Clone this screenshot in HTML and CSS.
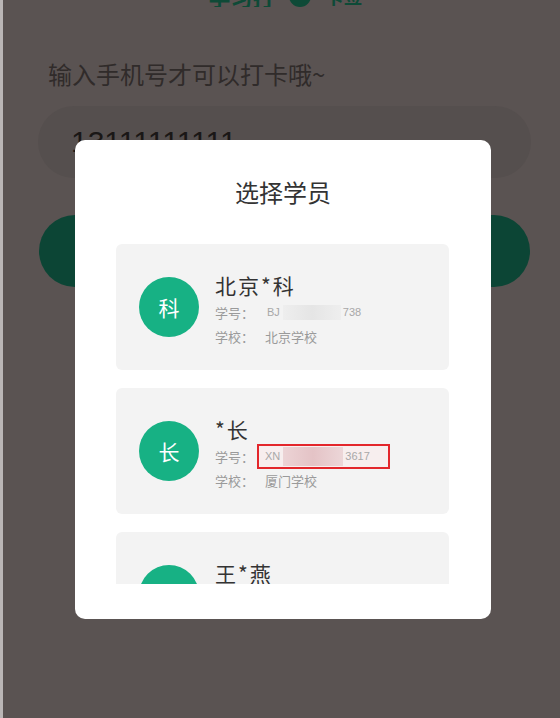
FILE: index.html
```html
<!DOCTYPE html>
<html lang="zh-CN">
<head>
<meta charset="utf-8">
<title>选择学员</title>
<link rel="stylesheet" href="styles.css">
</head>
<body>
<div class="page">
  <div class="logo">
    <span class="logo-text">学习打</span>
    <span class="logo-dot"></span>
    <span class="logo-text small">卡签</span>
  </div>
  <p class="prompt">输入手机号才可以打卡哦~</p>
  <div class="phone">13111111111</div>
  <div class="submit"></div>
</div>

<div class="modal">
  <h2 class="modal-title">选择学员</h2>
  <div class="list">
    <div class="card">
      <div class="avatar">科</div>
      <div class="info">
        <div class="name">北京*科</div>
        <div class="row"><span class="label">学号：</span><span class="sid"><span class="sid-text">BJ</span><span class="mask"></span><span class="sid-text">738</span></span></div>
        <div class="row"><span class="label">学校：</span><span class="school">北京学校</span></div>
      </div>
    </div>
    <div class="card">
      <div class="avatar">长</div>
      <div class="info">
        <div class="name">*长</div>
        <div class="row"><span class="label">学号：</span><span class="sid sid-marked"><span class="sid-text">XN</span><span class="mask mask-pink"></span><span class="sid-text">3617</span></span></div>
        <div class="row"><span class="label">学校：</span><span class="school">厦门学校</span></div>
      </div>
    </div>
    <div class="card">
      <div class="avatar">燕</div>
      <div class="info">
        <div class="name">王*燕</div>
        <div class="row"><span class="label">学号：</span><span class="sid"><span class="sid-text">WY</span><span class="mask"></span><span class="sid-text">204</span></span></div>
        <div class="row"><span class="label">学校：</span><span class="school">北京学校</span></div>
      </div>
    </div>
  </div>
</div>
</body>
</html>
```

FILE: styles.css
```css
* { box-sizing: border-box; }

html, body {
  margin: 0;
  padding: 0;
  width: 560px;
  height: 718px;
  overflow: hidden;
}

body {
  background: #5a5352;
  border-left: 3px solid #bab6b6;
  font-family: "Noto Sans CJK SC", "Noto Sans", "Liberation Sans", sans-serif;
  position: relative;
}

.page {
  display: flex;
  flex-direction: column;
}

.logo {
  height: 7px;
  overflow: hidden;
  display: flex;
  justify-content: center;
  align-items: flex-end;
  gap: 14px;
  padding-left: 8px;
}

.logo-text {
  font-size: 22px;
  line-height: 22px;
  font-weight: 700;
  color: #0e4a37;
  flex: none;
}

.logo-text.small { font-size: 19px; }

.logo-dot {
  width: 22px;
  height: 22px;
  border-radius: 50%;
  background: #0e4a37;
  flex: none;
}

.prompt {
  margin: 51px 0 0 45px;
  font-size: 24px;
  line-height: 32px;
  color: #302b2a;
}

.phone {
  margin: 16px 29px 0 35px;
  height: 72px;
  border-radius: 36px;
  background: #554f4e;
  padding-left: 33px;
  display: flex;
  align-items: center;
  font-family: "Liberation Sans", sans-serif;
  font-size: 30px;
  color: #1a1716;
}

.submit {
  margin: 37px 30px 0 36px;
  height: 72px;
  border-radius: 36px;
  background: #0c4535;
}

/* modal */
.modal {
  position: absolute;
  left: 72px;
  top: 140px;
  width: 416px;
  height: 479px;
  background: #ffffff;
  border-radius: 10px;
  display: flex;
  flex-direction: column;
}

.modal-title {
  margin: 36px 0 0;
  text-align: center;
  font-size: 24px;
  line-height: 32px;
  font-weight: 400;
  color: #333333;
}

.list {
  margin-top: 36px;
  height: 340px;
  overflow: hidden;
  padding: 0 42px 0 41px;
  display: flex;
  flex-direction: column;
  gap: 18px;
}

.card {
  flex: none;
  height: 126px;
  background: #f3f3f3;
  border-radius: 6px;
  display: flex;
  align-items: flex-start;
  padding: 26px 0 0 23px;
  gap: 16px;
}

.avatar {
  flex: none;
  width: 60px;
  height: 60px;
  margin-top: 7px;
  border-radius: 50%;
  background: #17b184;
  color: #ffffff;
  font-size: 21px;
  display: flex;
  align-items: center;
  justify-content: center;
}

.info {
  display: flex;
  flex-direction: column;
}

.name {
  font-size: 21px;
  line-height: 30px;
  color: #333333;
  letter-spacing: 2px;
}

.row {
  height: 24px;
  display: flex;
  align-items: center;
  font-size: 13px;
  color: #9a9a9a;
}

.label { flex: none; }

.school {
  margin-left: 11px;
  color: #9a9a9a;
}

.sid {
  display: flex;
  align-items: center;
  height: 25px;
  margin-left: 3px;
  padding: 0 18px 0 8px;
  border: 2px solid transparent;
}

.sid-marked {
  border-color: #e3262b;
  background: #f7eeee;
  padding-left: 6px;
}

.sid-text {
  font-family: "Liberation Sans", sans-serif;
  font-size: 11px;
  color: #a8a8a8;
}

.mask {
  width: 58px;
  height: 15px;
  margin: 0 2px 0 3px;
  background: linear-gradient(90deg, #eeeeee, #e5e5e5 50%, #eeeeee);
}

.mask-pink {
  width: 60px;
  height: 19px;
  background: linear-gradient(90deg, #ecd3d5, #e4c3c6 50%, #ecd6d8);
}
```
